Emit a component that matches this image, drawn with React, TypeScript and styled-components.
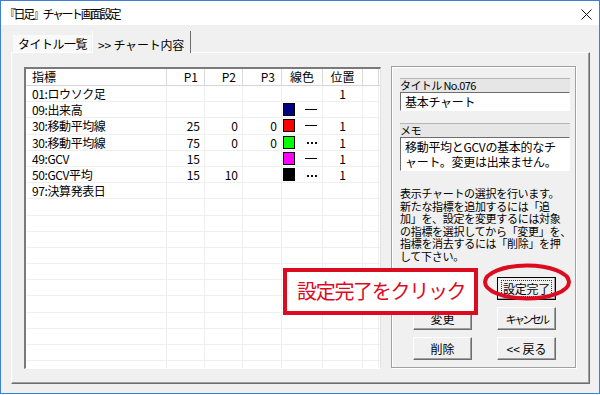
import React from "react";
import styled, { createGlobalStyle } from "styled-components";

// Indicator row for the chart list
interface Indicator {
  name: string;
  p1?: string;
  p2?: string;
  p3?: string;
  color?: string;
  line?: "solid" | "dot";
  pos?: string;
}

const GlobalStyle = createGlobalStyle`
  html, body {
    margin: 0;
    padding: 0;
    background: #ffffff;
  }
  body {
    font-family: "Noto Sans CJK JP", "Noto Sans", sans-serif;
    color: #000;
  }
  * {
    box-sizing: border-box;
  }
`;

const Window = styled.div`
  position: relative;
  width: 600px;
  height: 394px;
  border: 1px solid #3c7fd6;
  background: #f0f0f0;
  display: flex;
  flex-direction: column;
  overflow: hidden;
`;

const TitleBar = styled.div`
  height: 24px;
  background: #ffffff;
  display: flex;
  align-items: center;
  justify-content: space-between;
  padding: 0 7px 0 3px;
  font-size: 12px;
  letter-spacing: -2.4px;
`;

const CloseIcon = styled.svg`
  width: 11px;
  height: 11px;
  margin-top: 2px;
`;

const Body = styled.div`
  flex: 1;
  display: flex;
  flex-direction: column;
  padding: 6px 9px 9px 10px;
`;

const TabStrip = styled.div`
  display: flex;
  align-items: flex-end;
  height: 21px;
  padding-left: 2px;
  position: relative;
  z-index: 1;
`;

const Tab = styled.div<{ $active?: boolean }>`
  font-size: 12px;
  white-space: nowrap;
  height: ${(p) => (p.$active ? "22px" : "17px")};
  line-height: 15px;
  padding: ${(p) => (p.$active ? "6px 6px 0 5px" : "1px 4px 0 5px")};
  letter-spacing: ${(p) => (p.$active ? "-0.2px" : "-0.5px")};
  background: ${(p) => (p.$active ? "#f0f0f0" : "#f9f9f9")};
  border-left: ${(p) => (p.$active ? "1px solid #ffffff" : "none")};
  border-right: ${(p) => (p.$active ? "1px solid #6d6d6d" : "none")};
  margin-bottom: ${(p) => (p.$active ? "-1px" : "0")};
  margin-left: ${(p) => (p.$active ? "1px" : "0")};
`;

const Panel = styled.div`
  flex: 1;
  display: flex;
  align-items: flex-start;
  gap: 10px;
  padding: 13px 10px 0 12px;
  border-top: 1px solid #ffffff;
  border-left: 1px solid #ffffff;
  border-right: 1px solid #6d6d6d;
  border-bottom: 1px solid #6d6d6d;
  box-shadow: inset -1px -1px 0 #a0a0a0;
`;

const ListFrame = styled.div`
  width: 357px;
  height: 302px;
  margin-top: 1px;
  border-style: solid;
  border-width: 2px 1px 1px 2px;
  border-color: #7a7a7a #e3e3e3 #ffffff #7a7a7a;
  background: #ffffff;
  overflow: hidden;
`;

const COLUMNS = "141px 38px 38px 39px 41px 40px 16px";

const HeaderRow = styled.div`
  display: grid;
  grid-template-columns: ${COLUMNS};
  height: 17px;
  border-bottom: 1px solid #d5d5d5;
`;

const HeaderCell = styled.div<{ $align?: "left" | "right" | "center" }>`
  font-size: 12px;
  line-height: 15px;
  border-right: 1px solid #dadada;
  text-align: ${(p) => p.$align || "left"};
  padding: ${(p) =>
    p.$align === "right" ? "0 6px 0 0" : p.$align === "center" ? "0" : "0 0 0 6px"};
`;

const Row = styled.div`
  display: grid;
  grid-template-columns: ${COLUMNS};
  height: 16.2px;
  border-bottom: 1px solid #efefef;
`;

const Cell = styled.div<{ $align?: "left" | "right" | "center" }>`
  font-size: 12px;
  line-height: 15px;
  white-space: nowrap;
  border-right: 1px solid #efefef;
  text-align: ${(p) => p.$align || "left"};
  letter-spacing: ${(p) => (p.$align ? "0" : "-0.4px")};
  padding: ${(p) =>
    p.$align === "right" ? "0 4px 0 0" : p.$align === "center" ? "0" : "0 0 0 6px"};
`;

const ColorCell = styled.div`
  display: flex;
  align-items: center;
  border-right: 1px solid #efefef;
  padding-left: 1px;
`;

const Swatch = styled.span<{ $color: string }>`
  width: 12px;
  height: 13px;
  border: 1px solid #000;
  background: ${(p) => p.$color};
  margin-right: 10px;
`;

const SolidLine = styled.span`
  width: 12px;
  height: 1px;
  background: #000;
`;

const DotLine = styled.span`
  display: flex;
  gap: 2px;
  padding-left: 2px;
  margin-top: 2px;
  & > i {
    width: 2px;
    height: 2px;
    background: #111;
  }
`;

const SideFrame = styled.div`
  width: 185px;
  height: 302px;
  border: 1px solid #a0a0a0;
  box-shadow: inset 1px 1px 0 #ffffff, 1px 1px 0 #ffffff;
  display: flex;
  flex-direction: column;
  padding: 11px 5px 7px 8px;
`;

const FieldLabel = styled.div<{ $gap?: number }>`
  height: 14px;
  margin-top: ${(p) => p.$gap || 0}px;
  border-top: 1px solid #b5b5b5;
  background: #e6e6e6;
  font-size: 11px;
  line-height: 12px;
  letter-spacing: -0.6px;
  white-space: nowrap;
`;

const TextBox = styled.div<{ $height: number }>`
  height: ${(p) => p.$height}px;
  background: #ffffff;
  border-style: solid;
  border-width: 1px;
  border-color: #6d6d6d #ffffff #ffffff #6d6d6d;
  font-size: 12px;
  line-height: 15px;
  padding: 1px 3px 0 4px;
  white-space: nowrap;
  letter-spacing: -0.3px;
`;

const Description = styled.div`
  margin-top: 16px;
  font-size: 11px;
  line-height: 12.6px;
  letter-spacing: -0.3px;
  white-space: nowrap;
`;

const ButtonGrid = styled.div`
  margin-top: auto;
  display: grid;
  grid-template-columns: 59px 59px;
  column-gap: 25px;
  row-gap: 7px;
  padding-left: 13px;
`;

const Button = styled.div<{ $default?: boolean; $narrow?: boolean }>`
  height: 23px;
  display: flex;
  align-items: center;
  justify-content: center;
  font-size: ${(p) => (p.$narrow ? "11px" : "12px")};
  letter-spacing: ${(p) => (p.$narrow ? "-2.6px" : "0")};
  white-space: nowrap;
  background: #f0f0f0;
  border: 1px solid;
  border-color: ${(p) =>
    p.$default ? "#000000" : "#ffffff #6d6d6d #6d6d6d #ffffff"};
  box-shadow: inset -1px -1px 0 #a0a0a0;
`;

const FocusRing = styled.span`
  border: 1px dotted #333;
  padding: 0 1px;
  line-height: 15px;
  letter-spacing: -0.3px;
`;

const Callout = styled.div`
  position: absolute;
  left: 282px;
  top: 267px;
  width: 195px;
  height: 47px;
  border: 4px solid #dc0b1f;
  background: #ffffff;
  color: #dc0b1f;
  font-size: 20px;
  line-height: 38px;
  letter-spacing: -1.3px;
  padding-left: 10px;
  white-space: nowrap;
`;

const Ring = styled.svg`
  position: absolute;
  left: 481px;
  top: 262px;
  width: 90px;
  height: 38px;
`;

const indicators: Indicator[] = [
  { name: "01:ロウソク足", pos: "1" },
  { name: "09:出来高", color: "#000080", line: "solid" },
  { name: "30:移動平均線", p1: "25", p2: "0", p3: "0", color: "#ff0000", line: "solid", pos: "1" },
  { name: "30:移動平均線", p1: "75", p2: "0", p3: "0", color: "#00ff00", line: "dot", pos: "1" },
  { name: "49:GCV", p1: "15", color: "#ff00ff", line: "solid", pos: "1" },
  { name: "50:GCV平均", p1: "15", p2: "10", color: "#000000", line: "dot", pos: "1" },
  { name: "97:決算発表日" },
];

const EMPTY_ROWS = 11;

const App: React.FC = () => {
  const rows: Indicator[] = [
    ...indicators,
    ...Array.from({ length: EMPTY_ROWS }, () => ({ name: "" })),
  ];

  return (
    <>
      <GlobalStyle />
      <Window>
        <TitleBar>
          <span>『日足』チャート画面設定</span>
          <CloseIcon viewBox="0 0 11 11">
            <path d="M0.5 0.5 L10.5 10.5 M10.5 0.5 L0.5 10.5" stroke="#111" strokeWidth="1" />
          </CloseIcon>
        </TitleBar>
        <Body>
          <TabStrip>
            <Tab>タイトル一覧</Tab>
            <Tab $active>&gt;&gt; チャート内容</Tab>
          </TabStrip>
          <Panel>
            <ListFrame>
              <HeaderRow>
                <HeaderCell>指標</HeaderCell>
                <HeaderCell $align="right">P1</HeaderCell>
                <HeaderCell $align="right">P2</HeaderCell>
                <HeaderCell $align="right">P3</HeaderCell>
                <HeaderCell $align="center">線色</HeaderCell>
                <HeaderCell $align="center">位置</HeaderCell>
                <HeaderCell />
              </HeaderRow>
              {rows.map((r, i) => (
                <Row key={i}>
                  <Cell>{r.name}</Cell>
                  <Cell $align="right">{r.p1}</Cell>
                  <Cell $align="right">{r.p2}</Cell>
                  <Cell $align="right">{r.p3}</Cell>
                  <ColorCell>
                    {r.color && <Swatch $color={r.color} />}
                    {r.line === "solid" && <SolidLine />}
                    {r.line === "dot" && (
                      <DotLine>
                        <i />
                        <i />
                        <i />
                      </DotLine>
                    )}
                  </ColorCell>
                  <Cell $align="center">{r.pos}</Cell>
                  <Cell />
                </Row>
              ))}
            </ListFrame>

            <SideFrame>
              <FieldLabel>タイトル No.076</FieldLabel>
              <TextBox $height={19}>基本チャート</TextBox>
              <FieldLabel $gap={12}>メモ</FieldLabel>
              <TextBox $height={34}>
                移動平均とGCVの基本的なチ
                <br />
                ャート。変更は出来ません。
              </TextBox>
              <Description>
                表示チャートの選択を行います。
                <br />
                新たな指標を追加するには「追
                <br />
                加」を、設定を変更するには対象
                <br />
                の指標を選択してから「変更」を、
                <br />
                指標を消去するには「削除」を押
                <br />
                して下さい。
              </Description>
              <ButtonGrid>
                <Button>追加</Button>
                <Button $default>
                  <FocusRing>設定完了</FocusRing>
                </Button>
                <Button>変更</Button>
                <Button $narrow>キャンセル</Button>
                <Button>削除</Button>
                <Button>&lt;&lt; 戻る</Button>
              </ButtonGrid>
            </SideFrame>
          </Panel>
        </Body>

        <Callout>設定完了をクリック</Callout>
        <Ring viewBox="0 0 90 38">
          <ellipse cx="45" cy="19" rx="42" ry="16.5" fill="none" stroke="#dc0b1f" strokeWidth="4" />
        </Ring>
      </Window>
    </>
  );
};

export default App;
